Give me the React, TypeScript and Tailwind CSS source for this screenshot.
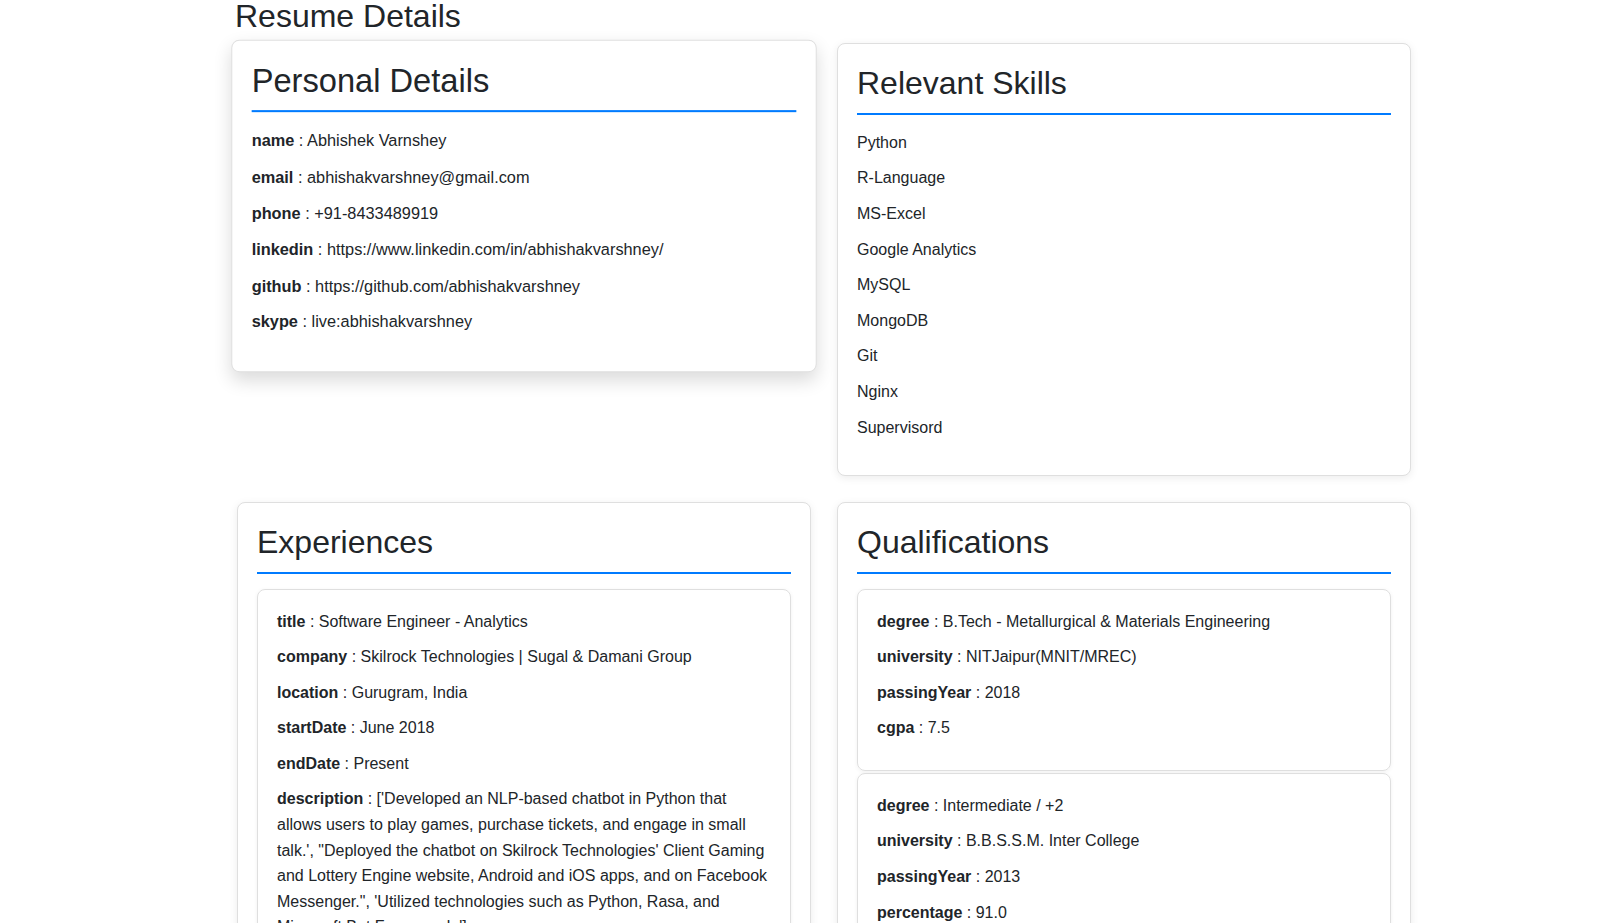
import React from 'react';

const personal: [string, string][] = [
  ['name', 'Abhishek Varnshey'],
  ['email', 'abhishakvarshney@gmail.com'],
  ['phone', '+91-8433489919'],
  ['linkedin', 'https://www.linkedin.com/in/abhishakvarshney/'],
  ['github', 'https://github.com/abhishakvarshney'],
  ['skype', 'live:abhishakvarshney'],
];

const skills = [
  'Python',
  'R-Language',
  'MS-Excel',
  'Google Analytics',
  'MySQL',
  'MongoDB',
  'Git',
  'Nginx',
  'Supervisord',
];

const experiences: [string, string][][] = [
  [
    ['title', 'Software Engineer - Analytics'],
    ['company', 'Skilrock Technologies | Sugal & Damani Group'],
    ['location', 'Gurugram, India'],
    ['startDate', 'June 2018'],
    ['endDate', 'Present'],
    [
      'description',
      `['Developed an NLP-based chatbot in Python that allows users to play games, purchase tickets, and engage in small talk.', "Deployed the chatbot on Skilrock Technologies' Client Gaming and Lottery Engine website, Android and iOS apps, and on Facebook Messenger.", 'Utilized technologies such as Python, Rasa, and Microsoft Bot Framework.']`,
    ],
  ],
];

const qualifications: [string, string][][] = [
  [
    ['degree', 'B.Tech - Metallurgical & Materials Engineering'],
    ['university', 'NITJaipur(MNIT/MREC)'],
    ['passingYear', '2018'],
    ['cgpa', '7.5'],
  ],
  [
    ['degree', 'Intermediate / +2'],
    ['university', 'B.B.S.S.M. Inter College'],
    ['passingYear', '2013'],
    ['percentage', '91.0'],
  ],
  [
    ['degree', 'High School'],
    ['university', 'B.B.S.S.M. Inter College'],
    ['passingYear', '2011'],
    ['percentage', '80.0'],
  ],
];

const Title = ({ children }: { children: React.ReactNode }) => (
  <h2 className="text-[32px] leading-[1.2] font-normal text-[#212529] pb-[10px] border-b-2 border-[#007bff] mb-[15px]">
    {children}
  </h2>
);

const Field = ({ label, value }: { label: string; value: string }) => (
  <p className="leading-[1.6] mb-[10px]">
    <b className="font-bold">{label}</b> : {value}
  </p>
);

const Card = ({ children, className = '' }: { children: React.ReactNode; className?: string }) => (
  <div className={`bg-white border border-[#dfdfdf] rounded-lg pt-5 px-[19px] pb-[25px] ${className}`}>{children}</div>
);

const InnerCard = ({ fields }: { fields: [string, string][] }) => (
  <div className="border border-[#dfdfdf] rounded-lg pt-[19px] px-[19px] pb-[19px] mb-[2px] shadow-[0_1px_4px_rgba(0,0,0,0.06)]">
    {fields.map(([k, v]) => (
      <Field key={k} label={k} value={v} />
    ))}
  </div>
);

export default function App() {
  return (
    <div className="min-h-screen bg-white text-[16px] text-[#212529] font-['Liberation_Sans',Arial,sans-serif]">
      <div className="ml-[237px] w-[1174px]">
        <h2 className="text-[32px] leading-[1.2] font-normal text-[#212529] mt-[-3px] mb-[8px] ml-[-2px]">
          Resume Details
        </h2>
        <div className="grid grid-cols-2 gap-x-[26px] gap-y-[26px] items-start">
          <Card className="scale-[1.02] shadow-[0_8px_18px_rgba(0,0,0,0.14)]">
            <Title>Personal Details</Title>
            {personal.map(([k, v]) => (
              <Field key={k} label={k} value={v} />
            ))}
          </Card>
          <Card className="shadow-[0_2px_8px_rgba(0,0,0,0.08)]">
            <Title>Relevant Skills</Title>
            {skills.map((s) => (
              <p key={s} className="leading-[1.6] mb-[10px]">
                {s}
              </p>
            ))}
          </Card>
          <Card className="shadow-[0_2px_8px_rgba(0,0,0,0.08)]">
            <Title>Experiences</Title>
            {experiences.map((e, i) => (
              <InnerCard key={i} fields={e} />
            ))}
          </Card>
          <Card className="shadow-[0_2px_8px_rgba(0,0,0,0.08)]">
            <Title>Qualifications</Title>
            {qualifications.map((q, i) => (
              <InnerCard key={i} fields={q} />
            ))}
          </Card>
        </div>
        <div className="h-10" />
      </div>
    </div>
  );
}
